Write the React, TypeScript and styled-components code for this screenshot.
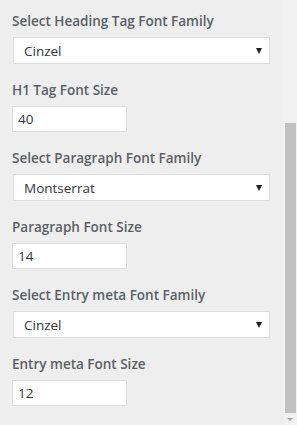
import React from "react";
import styled, { createGlobalStyle } from "styled-components";

const GlobalStyle = createGlobalStyle`
  html, body {
    margin: 0;
    padding: 0;
    background: #eeeeee;
  }
  body {
    font-family: "Open Sans", "Noto Sans", sans-serif;
  }
`;

const Frame = styled.div`
  display: flex;
  width: 297px;
  height: 425px;
  overflow: hidden;
  background: #eeeeee;
`;

const Panel = styled.div`
  flex: 1;
  padding: 11px 13px 0 12px;
`;

const Field = styled.div`
  margin-bottom: 16px;
`;

const Label = styled.label`
  display: block;
  font-size: 13.5px;
  line-height: 20px;
  font-weight: 600;
  color: #5a6067;
  margin-bottom: 6px;
`;

const SelectBox = styled.div`
  box-sizing: border-box;
  height: 27px;
  margin-left: 1px;
  padding: 0 10px;
  background: #fff;
  border: 1px solid #dddddd;
  display: flex;
  align-items: center;
  font-size: 13.5px;
  color: #32373c;
`;

const Arrow = styled.span`
  margin-left: auto;
  width: 0;
  height: 0;
  border-left: 3px solid transparent;
  border-right: 3px solid transparent;
  border-top: 6px solid #222;
  margin-right: -3px;
`;

const NumberBox = styled.div`
  box-sizing: border-box;
  width: 115px;
  height: 26px;
  padding: 0 5px;
  background: #fff;
  border: 1px solid #dddddd;
  display: flex;
  align-items: center;
  font-size: 13.5px;
  color: #32373c;
`;

const Scrollbar = styled.div`
  width: 14px;
  display: flex;
  flex-direction: column;
  background: #f1f1f1;
`;

const Track = styled.div<{ $size: number }>`
  height: ${(p) => p.$size}px;
`;

const Thumb = styled.div`
  flex: 1;
  background: #c1c1c1;
  margin: 0 1px 0 2px;
`;

const DownButton = styled.div`
  height: 12px;
  display: flex;
  justify-content: center;
  align-items: center;
`;

const DownArrow = styled.span`
  width: 0;
  height: 0;
  border-left: 3px solid transparent;
  border-right: 3px solid transparent;
  border-top: 3px solid #a3a3a3;
`;

const fields: { label: string; kind: "select" | "number"; value: string }[] = [
  { label: "Select Heading Tag Font Family", kind: "select", value: "Cinzel" },
  { label: "H1 Tag Font Size", kind: "number", value: "40" },
  { label: "Select Paragraph Font Family", kind: "select", value: "Montserrat" },
  { label: "Paragraph Font Size", kind: "number", value: "14" },
  { label: "Select Entry meta Font Family", kind: "select", value: "Cinzel" },
  { label: "Entry meta Font Size", kind: "number", value: "12" },
];

export default function App() {
  return (
    <>
      <GlobalStyle />
      <Frame>
        <Panel>
          {fields.map((f) => (
            <Field key={f.label}>
              <Label>{f.label}</Label>
              {f.kind === "select" ? (
                <SelectBox>
                  {f.value}
                  <Arrow />
                </SelectBox>
              ) : (
                <NumberBox>{f.value}</NumberBox>
              )}
            </Field>
          ))}
        </Panel>
        <Scrollbar>
          <Track $size={123} />
          <Thumb />
          <DownButton>
            <DownArrow />
          </DownButton>
        </Scrollbar>
      </Frame>
    </>
  );
}
